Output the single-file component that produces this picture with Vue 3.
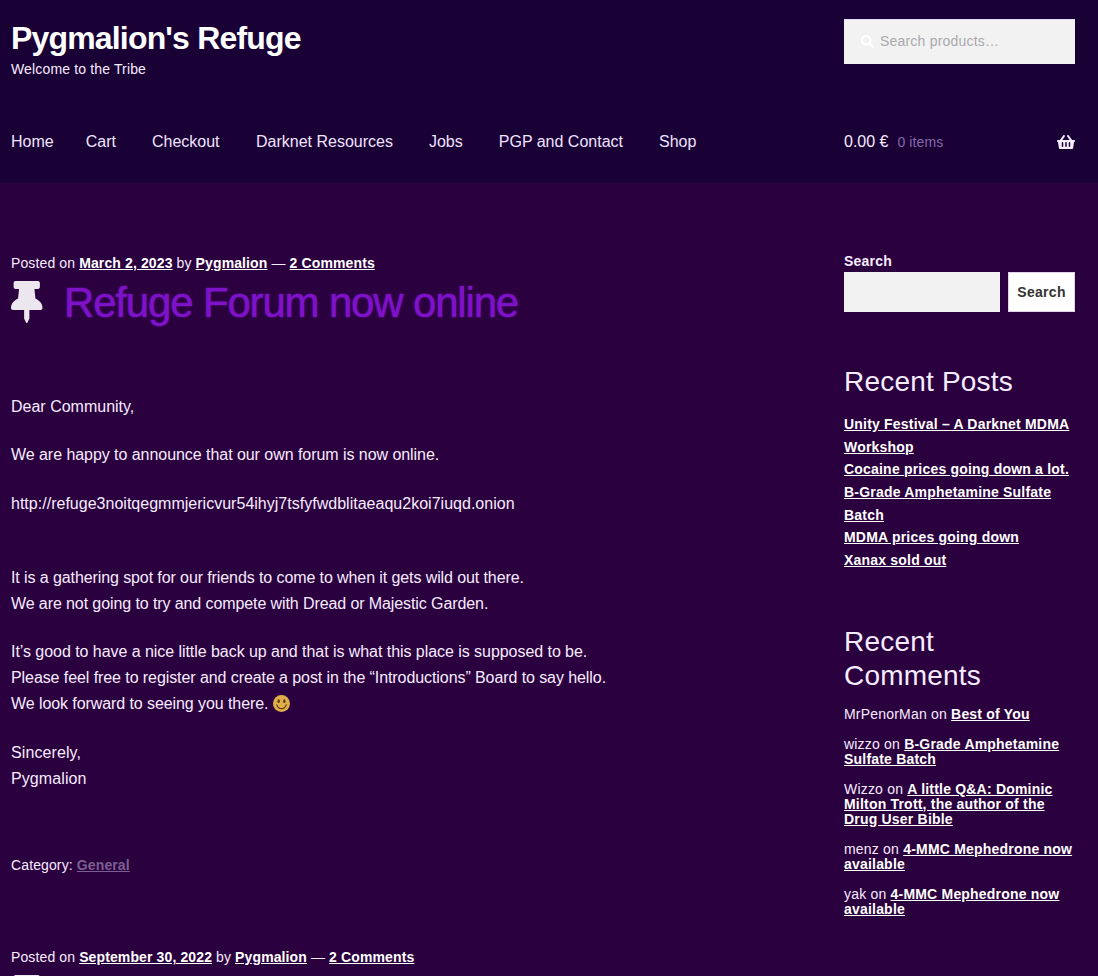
<script setup>
const nav = [
  { label: 'Home', gap: 32 },
  { label: 'Cart', gap: 36 },
  { label: 'Checkout', gap: 36.5 },
  { label: 'Darknet Resources', gap: 36 },
  { label: 'Jobs', gap: 36 },
  { label: 'PGP and Contact', gap: 36 },
  { label: 'Shop', gap: 0 },
]
const recentPosts = [
  'Unity Festival – A Darknet MDMA Workshop',
  'Cocaine prices going down a lot.',
  'B-Grade Amphetamine Sulfate Batch',
  'MDMA prices going down',
  'Xanax sold out',
]
const recentComments = [
  { who: 'MrPenorMan', post: 'Best of You' },
  { who: 'wizzo', post: 'B-Grade Amphetamine Sulfate Batch' },
  { who: 'Wizzo', post: 'A little Q&A: Dominic Milton Trott, the author of the Drug User Bible' },
  { who: 'menz', post: '4-MMC Mephedrone now available' },
  { who: 'yak', post: '4-MMC Mephedrone now available' },
]
const pin = 'M298.028 214.267L285.793 96H328c13.255 0 24-10.745 24-24V24c0-13.255-10.745-24-24-24H56C42.745 0 32 10.745 32 24v48c0 13.255 10.745 24 24 24h42.207L85.972 214.267C37.465 236.82 0 277.261 0 328c0 13.255 10.745 24 24 24h136v104.007c0 1.242.289 2.467.845 3.578l24 48c2.941 5.882 11.364 5.893 14.311 0l24-48a8.008 8.008 0 0 0 .845-3.578V352h136c13.255 0 24-10.745 24-24-.001-51.183-37.983-91.42-85.973-113.733z'
</script>

<template>
  <div class="page">
    <header class="site-header">
      <div class="branding-row">
        <div class="branding">
          <div class="site-title">Pygmalion's Refuge</div>
          <div class="tagline">Welcome to the Tribe</div>
        </div>
        <div class="product-search">
          <svg class="search-icon" viewBox="0 0 512 512"><path fill="#ffffff" d="M505 442.7L405.3 343c-4.5-4.5-10.6-7-17-7H372c27.6-35.3 44-79.7 44-128C416 93.1 322.9 0 208 0S0 93.1 0 208s93.1 208 208 208c48.3 0 92.7-16.4 128-44v16.3c0 6.4 2.5 12.5 7 17l99.7 99.7c9.4 9.4 24.6 9.4 33.9 0l28.3-28.3c9.4-9.4 9.4-24.6.1-34zM208 336c-70.7 0-128-57.2-128-128 0-70.7 57.2-128 128-128 70.7 0 128 57.2 128 128 0 70.7-57.2 128-128 128z"/></svg>
          <span>Search products…</span>
        </div>
      </div>
      <div class="nav-row">
        <nav class="main-nav">
          <a v-for="item in nav" :key="item.label" :style="{ marginRight: item.gap + 'px' }">{{ item.label }}</a>
        </nav>
        <div class="cart">
          <span class="amount">0.00 €</span>
          <span class="count">0 items</span>
          <svg class="basket" viewBox="0 0 576 512"><path fill="#f6ecff" d="M576 216v16c0 13.255-10.745 24-24 24h-8l-26.113 182.788C514.509 462.435 494.257 480 470.37 480H105.63c-23.887 0-44.139-17.565-47.518-41.212L32 256h-8c-13.255 0-24-10.745-24-24v-16c0-13.255 10.745-24 24-24h67.341l106.78-146.821c10.395-14.292 30.407-17.453 44.701-7.058 14.293 10.395 17.453 30.408 7.058 44.701L170.477 192h235.046L326.12 82.821c-10.395-14.292-7.234-34.306 7.059-44.701 14.291-10.395 34.306-7.235 44.701 7.058L484.659 192H552c13.255 0 24 10.745 24 24zM312 392V280c0-13.255-10.745-24-24-24s-24 10.745-24 24v112c0 13.255 10.745 24 24 24s24-10.745 24-24zm112 0V280c0-13.255-10.745-24-24-24s-24 10.745-24 24v112c0 13.255 10.745 24 24 24s24-10.745 24-24zm-224 0V280c0-13.255-10.745-24-24-24s-24 10.745-24 24v112c0 13.255 10.745 24 24 24s24-10.745 24-24z"/></svg>
        </div>
      </div>
    </header>

    <div class="content">
      <main class="posts">
        <article class="post">
          <div class="meta">Posted on <a>March 2, 2023</a> by <a>Pygmalion</a> — <a>2 Comments</a></div>
          <div class="title-row">
            <svg class="pin" viewBox="0 0 384 512"><path fill="#ece6ee" :d="pin"/></svg>
            <h1>Refuge Forum now online</h1>
          </div>
          <div class="body">
            <p>Dear Community,</p>
            <p class="tight-s">We are happy to announce that our own forum is now online.</p>
            <p class="wide-s">http://refuge3noitqegmmjericvur54ihyj7tsfyfwdblitaeaqu2koi7iuqd.onion<br><br></p>
            <p class="tight">It is a gathering spot for our friends to come to when it gets wild out there.<br>We are not going to try and compete with Dread or Majestic Garden.</p>
            <p class="tight-m"><span class="tight-s">It’s good to have a nice little back up and that is what this place is supposed to be.</span><br>Please feel free to register and create a post in the “Introductions” Board to say hello.<br>We look forward to seeing you there. <svg class="smile" viewBox="0 0 36 36"><circle cx="18" cy="18" r="18" fill="#ffcc4d"/><ellipse cx="12" cy="13" rx="2.5" ry="4" fill="#664500"/><ellipse cx="24" cy="13" rx="2.5" ry="4" fill="#664500"/><path d="M8 21c2 6 6 8 10 8s8-2 10-8" fill="none" stroke="#664500" stroke-width="2.5" stroke-linecap="round"/></svg></p>
            <p class="wide">Sincerely,<br>Pygmalion</p>
          </div>
          <div class="category">Category: <a>General</a></div>
        </article>
        <article class="post second">
          <div class="meta">Posted on <a>September 30, 2022</a> by <a>Pygmalion</a> — <a>2 Comments</a></div>
          <div class="title-row">
            <svg class="pin" viewBox="0 0 384 512"><path fill="#ece6ee" :d="pin"/></svg>
          </div>
        </article>
      </main>

      <aside class="sidebar">
        <div class="widget search-widget">
          <label>Search</label>
          <div class="search-form">
            <div class="search-input"></div>
            <button type="button">Search</button>
          </div>
        </div>
        <div class="widget">
          <h2>Recent Posts</h2>
          <ul class="post-list">
            <li v-for="p in recentPosts" :key="p"><a>{{ p }}</a></li>
          </ul>
        </div>
        <div class="widget">
          <h2>Recent Comments</h2>
          <ul class="comment-list">
            <li v-for="c in recentComments" :key="c.who">{{ c.who }} on <a>{{ c.post }}</a></li>
          </ul>
        </div>
      </aside>
    </div>
  </div>
</template>

<style>
html, body {
  margin: 0;
  height: 976px;
  overflow: hidden;
  background: #2b003e;
}
</style>

<style scoped>
.page {
  font-family: "Liberation Sans", Arial, sans-serif;
  color: #f6ecff;
  font-size: 16px;
  line-height: 1.618;
}
a {
  color: #ffffff;
  font-weight: 700;
  text-decoration: underline;
}
.site-header {
  background: #190035;
  height: 183px;
  box-sizing: border-box;
  padding: 19px 23px 0 11px;
}
.branding-row {
  display: flex;
  justify-content: space-between;
  height: 101px;
}
.site-title {
  font-size: 32px;
  font-weight: 700;
  letter-spacing: -0.83px;
  line-height: 38px;
  color: #ffffff;
}
.tagline {
  font-size: 14px;
  line-height: 24px;
  letter-spacing: 0.15px;
}
.product-search {
  width: 231px;
  height: 45px;
  box-sizing: border-box;
  background: #f2f2f2;
  border-top: 1px solid #e8dcf5;
  display: flex;
  align-items: center;
  padding: 0 0 2px 17px;
  font-size: 14px;
  color: #a9a9ad;
  letter-spacing: 0.2px;
}
.search-icon {
  width: 13px;
  height: 13px;
  margin-right: 6px;
}
.nav-row {
  display: flex;
  justify-content: space-between;
  align-items: center;
  height: 44px;
}
.main-nav a {
  font-weight: 400;
  text-decoration: none;
  color: #f0e4ff;
}
.cart {
  width: 231px;
  display: flex;
  align-items: center;
}
.amount {
  color: #f6ecff;
}
.count {
  margin-left: 9px;
  font-size: 14px;
  color: #8868aa;
  letter-spacing: 0.1px;
}
.basket {
  margin-left: auto;
  width: 18px;
  height: 16px;
}
.content {
  display: flex;
  justify-content: space-between;
  padding: 67px 23px 0 11px;
}
.posts {
  width: 800px;
}
.meta {
  font-size: 14px;
  line-height: 26px;
  letter-spacing: 0.12px;
}
.title-row {
  display: flex;
  align-items: center;
  height: 52px;
}
.pin {
  width: 31.5px;
  height: 42px;
  margin-right: 21.5px;
}
h1 {
  margin: 0;
  padding-top: 2px;
  font-size: 42px;
  font-weight: 400;
  line-height: 52px;
  letter-spacing: -1.17px;
  color: #7d12c8;
  text-shadow: 0 0 2px #7d12c8;
}
.body {
  margin-top: 65.6px;
  width: 640px;
}
.body p {
  margin: 0 0 22.65px;
}
.tight {
  letter-spacing: -0.095px;
}
.tight-m {
  letter-spacing: -0.08px;
}
.tight-s {
  letter-spacing: -0.05px;
}
.wide-s {
  letter-spacing: 0.015px;
}
.wide {
  letter-spacing: 0.1px;
}
.smile {
  width: 17px;
  height: 17px;
  vertical-align: -3px;
  opacity: 0.85;
}
.category {
  font-size: 14px;
  margin-top: 63px;
  line-height: 22px;
  letter-spacing: 0.12px;
}
.category a {
  color: #7a5f92;
}
.second {
  margin-top: 68px;
}
.sidebar {
  width: 231px;
  font-size: 14px;
  letter-spacing: 0.2px;
}
.search-widget label {
  display: block;
  font-weight: 700;
  line-height: 22px;
}
.search-form {
  display: flex;
  justify-content: space-between;
}
.search-input {
  width: 156px;
  height: 40px;
  background: #f2f2f2;
}
button {
  width: 67px;
  height: 40px;
  border: 1px solid #e4d3ee;
  background: #ffffff;
  color: #333333;
  font: 700 14px "Liberation Sans", Arial, sans-serif;
  letter-spacing: 0.3px;
  padding: 0;
}
h2 {
  margin: 0;
  font-size: 28px;
  font-weight: 400;
  line-height: 34px;
  letter-spacing: 0.2px;
  color: #f6ecff;
}
.widget + .widget {
  margin-top: 53px;
}
.post-list, .comment-list {
  list-style: none;
  margin: 0;
  padding: 0;
}
.post-list {
  margin-top: 14px;
  line-height: 22.65px;
}
.comment-list {
  margin-top: 14px;
  line-height: 15px;
}
.comment-list li + li {
  margin-top: 15px;
}
</style>
